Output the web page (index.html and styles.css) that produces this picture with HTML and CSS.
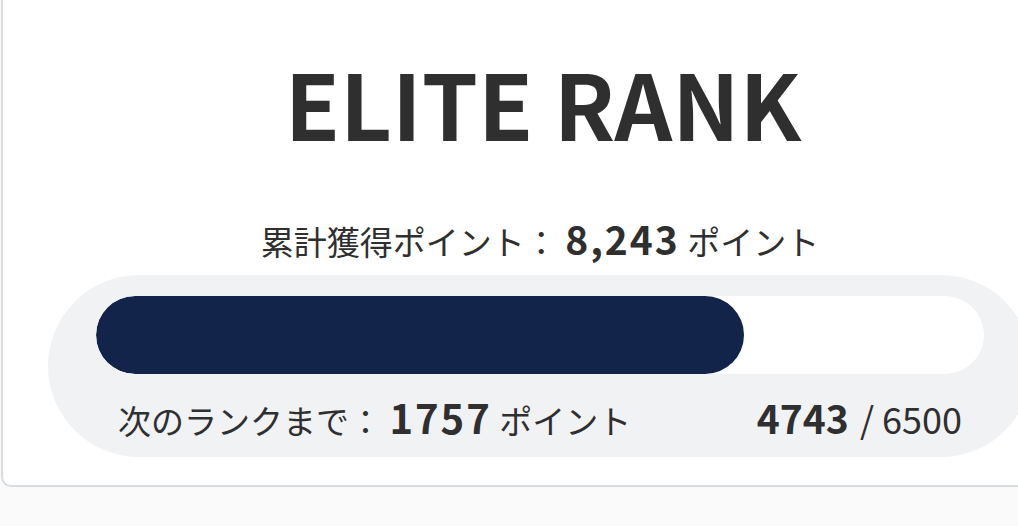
FILE: index.html
```html
<!DOCTYPE html>
<html lang="ja">
<head>
<meta charset="utf-8">
<link rel="stylesheet" href="styles.css">
</head>
<body>
<div class="viewport">
  <section class="card">
    <h1 class="rank">ELITE RANK</h1>
    <p class="total">累計獲得ポイント： <span class="num">8,243</span> ポイント</p>
    <div class="progress">
      <div class="track"><div class="fill" style="width: 72.97%"></div></div>
      <div class="meta">
        <span class="next">次のランクまで： <span class="num">1757</span> ポイント</span>
        <span class="ratio"><span class="num">4743</span><span class="max"> / 6500</span></span>
      </div>
    </div>
  </section>
</div>
</body>
</html>
```

FILE: styles.css
```css
html, body {
  margin: 0;
  padding: 0;
}
body {
  background: #fafafa;
  font-family: "Noto Sans CJK JP", "Noto Sans", sans-serif;
  color: #2f2f2f;
}
.viewport {
  width: 1018px;
  height: 526px;
  overflow: hidden;
}
.card {
  box-sizing: border-box;
  width: 1078px;
  margin: -30px 0 0 1px;
  padding: 85px 45px 28px;
  background: #fff;
  border: 2px solid #dadde0;
  border-radius: 10px;
}
.rank {
  margin: 0;
  padding-left: 6px;
  font-size: 90px;
  line-height: 90px;
  font-weight: 700;
  text-align: center;
}
.total {
  margin: 71px 0 0;
  font-size: 33px;
  line-height: 44px;
  text-align: center;
}
.num {
  font-size: 39px;
  font-weight: 700;
  letter-spacing: 0.05em;
  line-height: 40px;
}
.progress {
  margin-top: 12px;
  background: #f1f2f4;
  border-radius: 999px;
  padding: 21px 48px 0;
  height: 182px;
  box-sizing: border-box;
}
.track {
  height: 78px;
  background: #fff;
  border-radius: 39px;
  overflow: hidden;
}
.fill {
  height: 100%;
  background: #13244a;
  border-radius: 39px;
}
.meta {
  display: flex;
  justify-content: space-between;
  align-items: baseline;
  padding: 19px 22px 0;
  font-size: 33px;
  line-height: 50px;
}
.next .num {
  font-size: 40px;
  letter-spacing: 0.05em;
}
.ratio .num {
  letter-spacing: 0;
  margin-right: 3px;
}
.max {
  font-size: 36px;
}
```
